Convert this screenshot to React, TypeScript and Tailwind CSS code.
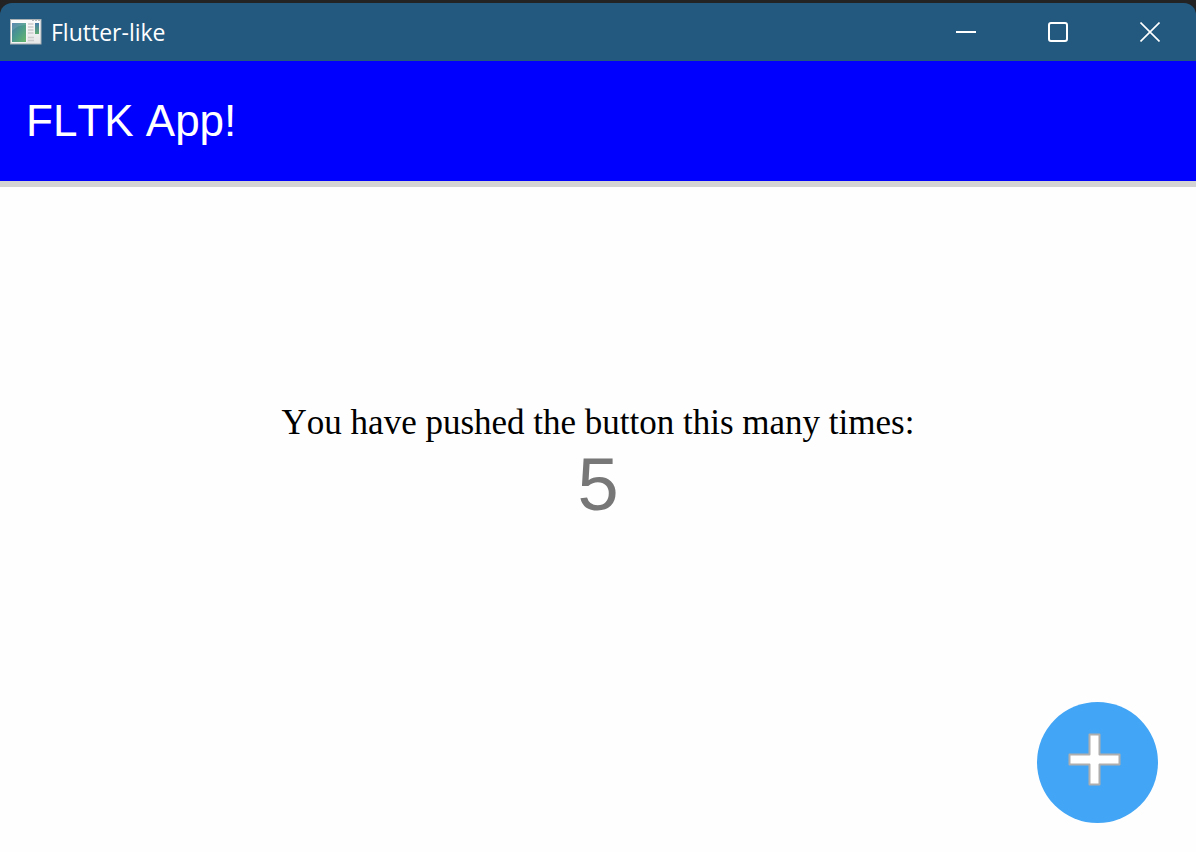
import { useState } from "react";

function AppIcon() {
  return (
    <svg width="32" height="26" viewBox="0 0 32 26" aria-hidden="true" className="shrink-0">
      <defs>
        <linearGradient id="frame" x1="0" y1="0" x2="0" y2="1">
          <stop offset="0" stopColor="#fbfbfb" />
          <stop offset="1" stopColor="#e6e6e6" />
        </linearGradient>
        <linearGradient id="pane" x1="0" y1="0" x2="1" y2="1">
          <stop offset="0" stopColor="#4577a6" />
          <stop offset="0.5" stopColor="#4b9b8c" />
          <stop offset="1" stopColor="#68b76c" />
        </linearGradient>
        <linearGradient id="thumb" x1="0" y1="0" x2="0" y2="1">
          <stop offset="0" stopColor="#477daa" />
          <stop offset="1" stopColor="#60ad72" />
        </linearGradient>
      </defs>
      <rect x="0.5" y="0.5" width="30.5" height="24.5" fill="url(#frame)" stroke="#aab1b5" />
      <path d="M22 1.5H24M25 1.5H27M28 1.5H30" stroke="#b4babd" />
      <rect x="1.500" y="3.500" width="15" height="20" fill="#ffffff" />
      <rect x="2" y="4" width="14" height="19" fill="url(#pane)" />
      <path d="M2 12Q7 6 16 6V4H2Z" fill="#ffffff" opacity="0.12" />
      <path d="M18 5H23.500M18 8H23.500M18 11H23.500M18 14H23.500M18 18.500H24M18 21.500H24" stroke="#cccccc" strokeWidth="1.500" />
      <rect x="25" y="4" width="4" height="11" fill="url(#thumb)" />
    </svg>
  );
}

function TitleBar() {
  return (
    <div className="bg-[#232323] pt-[3px]">
      <header className="flex h-[58px] items-stretch rounded-t-xl bg-[#23597f] text-white">
        <div className="flex grow items-center gap-[9px] pl-2.5">
          <AppIcon />
          <span className="font-['Open_Sans',sans-serif] text-[23px] leading-8">Flutter-like</span>
        </div>
        <button type="button" aria-label="Minimize" className="flex w-[92px] items-center justify-center">
          <svg width="20" height="20" viewBox="0 0 20 20" fill="none" stroke="currentColor" strokeWidth="2">
            <path d="M0 10H20" />
          </svg>
        </button>
        <button type="button" aria-label="Maximize" className="flex w-[92px] items-center justify-center">
          <svg width="20" height="20" viewBox="0 0 20 20" fill="none" stroke="currentColor" strokeWidth="2">
            <rect x="1" y="1" width="18" height="18" rx="2" />
          </svg>
        </button>
        <button type="button" aria-label="Close" className="flex w-[92px] items-center justify-center">
          <svg width="20" height="20" viewBox="0 0 20 20" fill="none" stroke="currentColor" strokeWidth="1.6">
            <path d="M0.500 0.500L19.500 19.500M19.500 0.500L0.500 19.500" />
          </svg>
        </button>
      </header>
    </div>
  );
}

export default function App() {
  const [count, setCount] = useState(5);

  return (
    <div className="flex min-h-screen flex-col bg-[#fefefe] [font-kerning:none]">
      <TitleBar />
      <div className="flex h-[126px] items-center border-b-6 border-[#d3d3d3] bg-[#0000ff] px-[26px]">
        <h1 className="font-['Liberation_Sans',Arial,sans-serif] text-[44px] leading-[46px] text-white">FLTK App!</h1>
      </div>
      <main className="relative flex grow flex-col items-center justify-center gap-0.5 pb-28 text-center">
        <p className="font-['Liberation_Serif',serif] text-[35px] leading-10 text-black">
          You have pushed the button this many times:
        </p>
        <output className="font-['Liberation_Sans',Arial,sans-serif] text-[74px] leading-20 text-[#777777]">{count}</output>
        <button
          type="button"
          aria-label="Increment"
          onClick={() => setCount(count + 1)}
          className="absolute right-[38px] bottom-[29px] flex size-[121px] items-center justify-center rounded-full bg-[#42a5f5]"
        >
          <svg width="121" height="121" viewBox="0 0 121 121" aria-hidden="true">
            <path
              d="M52.500 32.500H62.500V52.500H82.500V62.500H62.500V82.500H52.500V62.500H32.500V52.500H52.500Z"
              fill="#ffffff"
              stroke="#aeaeae"
              strokeWidth="2"
              strokeLinejoin="round"
            />
          </svg>
        </button>
      </main>
    </div>
  );
}
